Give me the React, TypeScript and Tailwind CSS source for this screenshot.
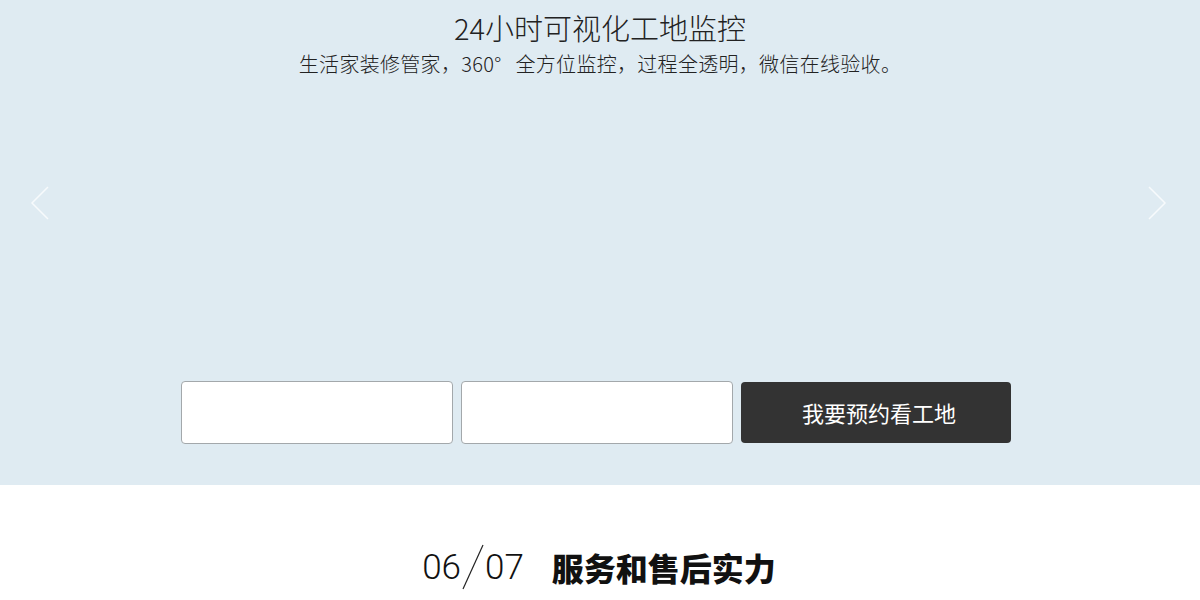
import React from "react";

const font = { fontFamily: '"Noto Sans CJK SC", "Liberation Sans", sans-serif' };
const digits = { fontFamily: 'Roboto, "Liberation Sans", sans-serif', fontWeight: 300 };

const Chevron = ({ dir }: { dir: "left" | "right" }) => (
  <svg width="22" height="36" viewBox="0 0 22 36" fill="none">
    <path
      d={dir === "left" ? "M19 2 L3 18 L19 34" : "M3 2 L19 18 L3 34"}
      stroke="#ffffff"
      strokeOpacity="0.75"
      strokeWidth="1.5"
    />
  </svg>
);

export default function App() {
  return (
    <div className="w-[1200px] h-[600px] overflow-hidden bg-white" style={font}>
      <section className="relative h-[485px] bg-[#dfebf2] flex flex-col items-center">
        <h1 className="mt-[8px] text-[29px] leading-[38px] font-light text-[#222]">
          24小时可视化工地监控
        </h1>
        <p className="mt-[5px] text-[20px] leading-[26px] font-light tracking-[0.3px] text-[#222]">
          生活家装修管家，360°<span className="inline-block w-[14px]" />全方位监控，过程全透明，微信在线验收。
        </p>
        <div className="absolute left-[29px] top-[185px]">
          <Chevron dir="left" />
        </div>
        <div className="absolute right-[32px] top-[185px]">
          <Chevron dir="right" />
        </div>
        <form className="mt-auto mb-[41px] mr-[8px] flex gap-2 items-center">
          <input className="w-[272px] h-[63px] bg-white border border-[#a3a8ab] rounded-[4px] outline-none" />
          <input className="w-[272px] h-[63px] bg-white border border-[#a3a8ab] rounded-[4px] outline-none" />
          <button
            type="button"
            className="w-[270px] h-[61px] pl-[6px] bg-[#333333] rounded-[4px] text-white text-[22px] font-normal"
          >
            我要预约看工地
          </button>
        </form>
      </section>
      <section className="flex justify-center items-center pt-[58px]">
        <div className="flex items-center text-[#111] mr-[2px]">
          <span className="text-[35px] leading-none" style={digits}>
            06
          </span>
          <svg width="26" height="48" viewBox="0 0 26 48" className="-mx-[1px]">
            <line x1="23" y1="2" x2="3" y2="46" stroke="#222" strokeWidth="1.2" />
          </svg>
          <span className="text-[35px] leading-none" style={digits}>
            07
          </span>
          <h2 className="ml-[28px] text-[32px] font-black leading-none">服务和售后实力</h2>
        </div>
      </section>
    </div>
  );
}
